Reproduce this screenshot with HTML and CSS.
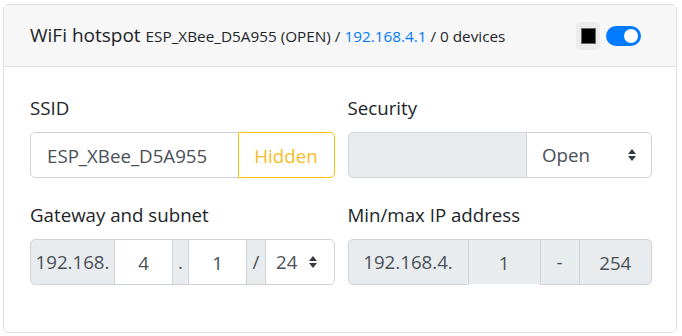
FILE: index.html
```html
<!DOCTYPE html>
<html lang="en">
<head>
    <meta charset="UTF-8">
    <meta name="viewport" content="width=device-width, initial-scale=1.0">
    <title>WiFi hotspot</title>
    <link rel="stylesheet" href="styles.css">
</head>
<body>
    <div class="card">
        <div class="card-header">
            <h5 class="card-title">WiFi hotspot <small>ESP_XBee_D5A955 (OPEN) / <a href="#">192.168.4.1</a> / 0 devices</small></h5>
            <div class="header-tools">
                <span class="swatch-box"><span class="swatch"></span></span>
                <span class="switch"><span class="knob"></span></span>
            </div>
        </div>

        <div class="card-body">
            <div class="form-row">
                <div class="form-group">
                    <label>SSID</label>
                    <div class="input-group">
                        <input class="form-control" type="text" value="ESP_XBee_D5A955">
                        <button class="btn-hidden">Hidden</button>
                    </div>
                </div>

                <div class="form-group">
                    <label>Security</label>
                    <div class="input-group">
                        <span class="addon addon-fill"></span>
                        <div class="select select-security">
                            <span>Open</span>
                            <svg class="caret" width="8" height="12" viewBox="0 0 8 12"><path d="M4 0L8 5H0z M4 12L0 7H8z" fill="#343a40"/></svg>
                        </div>
                    </div>
                </div>

                <div class="form-group">
                    <label>Gateway and subnet</label>
                    <div class="input-group">
                        <span class="addon gw-prefix">192.168.</span>
                        <input class="form-control center gw-octet" type="text" value="4">
                        <span class="addon gw-dot">.</span>
                        <input class="form-control center gw-octet" type="text" value="1">
                        <span class="addon gw-slash">/</span>
                        <div class="select select-mask">
                            <span>24</span>
                            <svg class="caret" width="8" height="12" viewBox="0 0 8 12"><path d="M4 0L8 5H0z M4 12L0 7H8z" fill="#343a40"/></svg>
                        </div>
                    </div>
                </div>

                <div class="form-group">
                    <label>Min/max IP address</label>
                    <div class="input-group">
                        <span class="addon range-prefix">192.168.4.</span>
                        <input class="form-control center range-min" type="text" value="1" disabled>
                        <span class="addon range-dash">-</span>
                        <input class="form-control center range-max" type="text" value="254" disabled>
                    </div>
                </div>
            </div>
        </div>
    </div>
</body>
</html>
```
FILE: styles.css
```css
:root {
    --border-color: #ced4da;
    --addon-bg: #e9ecef;
    --input-text: #495057;
    --text-color: #212529;
    --accent-color: #007bff;
    --warning-color: #ffc107;
}

* {
    margin: 0;
    padding: 0;
    box-sizing: border-box;
}

body {
    margin: 4px 5px 0 3px;
    font-family: "Open Sans", sans-serif;
    color: var(--text-color);
    background: #fff;
    line-height: 1.5;
}

.card {
    border: 1px solid #dfdfdf;
    border-radius: 5px;
    overflow: hidden;
}

.card-header {
    display: flex;
    align-items: center;
    justify-content: space-between;
    height: 62px;
    padding: 0 35px 0 26px;
    background: #f7f7f7;
    border-bottom: 1px solid #dfdfdf;
}

.card-title {
    font-size: 19px;
    font-weight: 400;
    line-height: 1.5;
}

.card-title small {
    font-size: 15.3px;
}

.card-title a {
    color: var(--accent-color);
    text-decoration: none;
}

.header-tools {
    display: flex;
    align-items: center;
    gap: 6px;
}

.swatch-box {
    display: flex;
    align-items: center;
    justify-content: center;
    width: 24px;
    height: 28px;
    background: #ececec;
    border-radius: 4px;
}

.swatch {
    width: 15px;
    height: 16px;
    background: #000;
    border: 1px solid #666;
}

.switch {
    display: flex;
    align-items: center;
    justify-content: flex-end;
    width: 35px;
    height: 20px;
    padding: 0 3px;
    background: var(--accent-color);
    border-radius: 10px;
}

.knob {
    width: 14px;
    height: 14px;
    background: #fff;
    border-radius: 50%;
}

.card-body {
    padding: 27px 24px 47px 26px;
}

.form-row {
    display: grid;
    grid-template-columns: 1fr 1fr;
    column-gap: 13px;
    row-gap: 23px;
}

.form-group label {
    display: block;
    font-size: 18.7px;
    line-height: 28px;
    margin-bottom: 10px;
}

.input-group {
    display: flex;
    height: 46px;
}

.input-group > * {
    height: 46px;
    border: 1px solid var(--border-color);
    font-family: inherit;
    font-size: 18.7px;
    color: var(--input-text);
}

.input-group > * + * {
    margin-left: -1px;
}

.input-group > :first-child {
    border-radius: 5px 0 0 5px;
}

.input-group > :last-child {
    border-radius: 0 5px 5px 0;
}

.form-control {
    flex: 1;
    width: 0;
    min-width: 0;
    padding: 0 16px;
    background: #fff;
    outline: none;
}

.form-control.center {
    text-align: center;
    padding: 0;
}

.form-control:disabled {
    background: var(--addon-bg);
    opacity: 1;
}

.btn-hidden {
    width: 97px;
    flex: none;
    background: #fff;
    border-color: var(--warning-color);
    color: #f7bd2a;
    position: relative;
}

.addon {
    display: flex;
    align-items: center;
    justify-content: center;
    flex: none;
    background: var(--addon-bg);
}

.addon-fill {
    flex: 1;
}

.select {
    display: flex;
    align-items: center;
    justify-content: space-between;
    background: #fff;
}

.select-security {
    width: 126px;
    flex: none;
    padding: 0 15px;
}

.select-mask {
    flex: 1;
    padding: 0 17px 0 10px;
}

.gw-prefix { width: 85px; }
.gw-octet { flex: none; width: 59px; }
.gw-dot { width: 17px; }
.gw-slash { width: 20px; }

.range-prefix { width: 121px; }
.range-min { flex: none; width: 73px; border-bottom-color: #fff; }
.range-dash { width: 40px; }
```
